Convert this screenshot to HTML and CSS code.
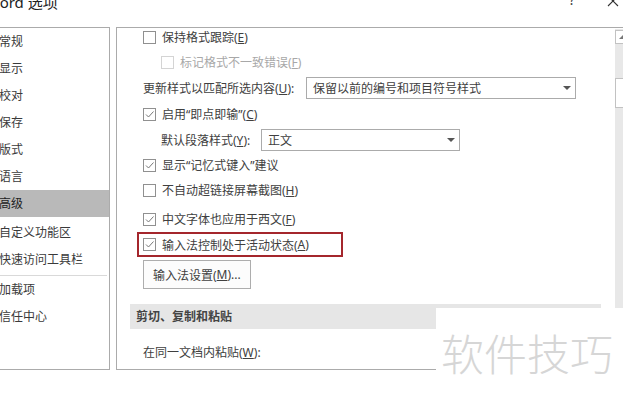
FILE: index.html
```html
<html>
<head>
    <meta charset="utf-8" />
    <title>Word 选项</title>
    <link rel="stylesheet" href="styles.css">
</head>
<body>
    <div class="titlebar">
        <span class="title">Word 选项</span>
        <span class="tb-help">?</span>
        <svg class="tb-close" width="12" height="12" viewBox="0 0 12 12">
            <path d="M1 1 L11 11 M11 1 L1 11" stroke="#333" stroke-width="1.1" fill="none" />
        </svg>
    </div>
    <div class="main">
        <!--categories-->
        <div class="sidebar">
            <div class="nav">常规</div>
            <div class="nav">显示</div>
            <div class="nav">校对</div>
            <div class="nav">保存</div>
            <div class="nav">版式</div>
            <div class="nav">语言</div>
            <div class="nav selected">高级</div>
            <div class="nav">自定义功能区</div>
            <div class="nav">快速访问工具栏</div>
            <div class="sep"></div>
            <div class="nav">加载项</div>
            <div class="nav">信任中心</div>
        </div>
        <!--options-->
        <div class="panel">
            <div class="pane">
                <div class="row first">
                    <span class="cb"></span>保持格式跟踪(<u>E</u>)
                </div>
                <div class="row indent disabled gap5">
                    <span class="cb"></span>标记格式不一致错误(<u>F</u>)
                </div>
                <div class="row gap4">
                    <span class="label wide">更新样式以匹配所选内容(<u>U</u>):</span>
                    <span class="select select-long">保留以前的编号和项目符号样式<i class="arrow"></i></span>
                </div>
                <div class="row gap4">
                    <span class="cb on"><svg width="11" height="11" viewBox="0 0 11 11"><path d="M2 5.5 L4.5 8 L9.5 2.5" stroke="#777" stroke-width="1" fill="none" /></svg></span>启用“即点即输”(<u>C</u>)
                </div>
                <div class="row indent gap4">
                    <span class="label">默认段落样式(<u>Y</u>):</span>
                    <span class="select select-short">正文<i class="arrow"></i></span>
                </div>
                <div class="row">
                    <span class="cb on"><svg width="11" height="11" viewBox="0 0 11 11"><path d="M2 5.5 L4.5 8 L9.5 2.5" stroke="#777" stroke-width="1" fill="none" /></svg></span>显示“记忆式键入”建议
                </div>
                <div class="row">
                    <span class="cb"></span>不自动超链接屏幕截图(<u>H</u>)
                </div>
                <div class="row gap7">
                    <span class="cb on"><svg width="11" height="11" viewBox="0 0 11 11"><path d="M2 5.5 L4.5 8 L9.5 2.5" stroke="#777" stroke-width="1" fill="none" /></svg></span>中文字体也应用于西文(<u>F</u>)
                </div>
                <div class="row marked">
                    <span class="cb on"><svg width="11" height="11" viewBox="0 0 11 11"><path d="M2 5.5 L4.5 8 L9.5 2.5" stroke="#777" stroke-width="1" fill="none" /></svg></span>输入法控制处于活动状态(<u>A</u>)
                </div>
                <div class="row btn-row">
                    <span class="btn">输入法设置(<u>M</u>)...</span>
                </div>
                <div class="section">剪切、复制和粘贴</div>
                <div class="row gap12">
                    <span class="label">在同一文档内粘贴(<u>W</u>):</span>
                </div>
            </div>
            <div class="scrollbar">
                <div class="sb-up"><i></i></div>
                <div class="sb-thumb"></div>
            </div>
        </div>
    </div>
    <div class="watermark">软件技巧</div>
</body>
</html>
```

FILE: styles.css
```css
body {
    margin: 0;
    width: 623px;
    height: 401px;
    overflow: hidden;
    position: relative;
    background: #fff;
    color: #404040;
    font-family: "Segoe UI", "Noto Sans", "Noto Sans CJK SC", sans-serif;
    font-size: 12px;
}

.titlebar {
    height: 27px;
    display: flex;
    align-items: flex-start;
}

    .titlebar .title {
        font-size: 15px;
        line-height: 15px;
        margin-top: -5px;
        margin-left: -14px;
        color: #222;
    }

    .titlebar .tb-help {
        margin-left: auto;
        margin-top: -8px;
        font-size: 14px;
        line-height: 16px;
        color: #444;
    }

    .titlebar .tb-close {
        margin: -5px 4px 0 32px;
    }

.main {
    display: flex;
    height: 343px;
}

.sidebar {
    width: 110px;
    border: 1px solid #ababab;
    border-left: none;
    box-sizing: border-box;
}

    .sidebar .nav {
        height: 27px;
        line-height: 27px;
        margin-left: -1px;
        font-size: 12px;
        color: #3a3a3a;
        white-space: nowrap;
    }

    .sidebar .selected {
        background: #b9b9b9;
        color: #222;
    }

    .sidebar .nav:nth-child(8) {
        margin-top: 2px;
    }

    .sidebar .sep {
        height: 1px;
        margin: 2px 2px 0 0;
        background: #d9d9d9;
    }

.panel {
    flex: 1;
    margin-left: 6px;
    border: 1px solid #ababab;
    border-right: none;
    display: flex;
}

.pane {
    flex: 1;
    padding-left: 26px;
}

.row {
    display: flex;
    align-items: center;
    height: 22px;
    margin-top: 3px;
    white-space: nowrap;
}

    .row.first { height: 18px; margin-top: 0; }
    .row.gap4 { margin-top: 4px; }
    .row.gap5 { margin-top: 5px; }
    .row.gap7 { margin-top: 7px; }
    .row.gap12 { margin-top: 12px; }
    .row.indent { padding-left: 18px; }
    .row.disabled { color: #a8a8a8; }

    .row.marked {
        margin-top: 2px;
        margin-left: -6px;
        height: 25px;
        width: 206px;
        box-sizing: border-box;
        border: 2px solid #a4262c;
        padding-left: 4px;
    }

    .row.btn-row {
        height: 29px;
    }

.cb {
    width: 13px;
    height: 13px;
    box-sizing: border-box;
    border: 1px solid #909090;
    margin-right: 6px;
    display: flex;
    align-items: center;
    justify-content: center;
    background: #fff;
}

.disabled .cb {
    border-color: #d4d4d4;
}

.label {
    display: inline-block;
}

    .label.wide {
        width: 163px;
    }

.indent .label {
    width: 100px;
}

.select {
    height: 22px;
    box-sizing: border-box;
    border: 1px solid #ababab;
    padding: 0 6px;
    display: flex;
    align-items: center;
    justify-content: space-between;
}

.select-long { width: 270px; }
.select-short { width: 199px; }

.arrow {
    width: 0;
    height: 0;
    border-top: 4px solid #555;
    border-left: 4px solid transparent;
    border-right: 4px solid transparent;
    margin-right: -2px;
}

.btn {
    width: 108px;
    height: 29px;
    box-sizing: border-box;
    border: 1px solid #adadad;
    background: #fcfcfc;
    padding-left: 9px;
    display: flex;
    align-items: center;
}

.section {
    margin: 15px 14px 0 -13px;
    height: 25px;
    line-height: 25px;
    background: #e6e6e6;
    padding-left: 6px;
    font-weight: bold;
    color: #444;
}

.scrollbar {
    width: 8px;
    margin-top: 1px;
    background: #e8e8e8;
}

.sb-up {
    height: 14px;
    margin-top: 1px;
    background: #fff;
    border: 1px solid #c2c2c2;
    border-right: none;
    box-sizing: border-box;
}

    .sb-up i {
        display: block;
        width: 0;
        height: 0;
        margin: 4px 0 0 3px;
        border-bottom: 4px solid #777;
        border-left: 4px solid transparent;
        border-right: 4px solid transparent;
    }

.sb-thumb {
    height: 30px;
    margin-top: 34px;
    background: #fff;
    border: 1px solid #c2c2c2;
    border-right: none;
    box-sizing: border-box;
}

/* site watermark laid over the dialog corner */
.watermark {
    position: absolute;
    left: 436px;
    top: 308px;
    right: 0;
    bottom: 0;
    background: #fff;
    padding: 21px 0 0 5px;
    font-family: "Noto Sans CJK SC", sans-serif;
    font-weight: 300;
    font-size: 43px;
    line-height: 46px;
    color: #d6d6d6;
}
```
